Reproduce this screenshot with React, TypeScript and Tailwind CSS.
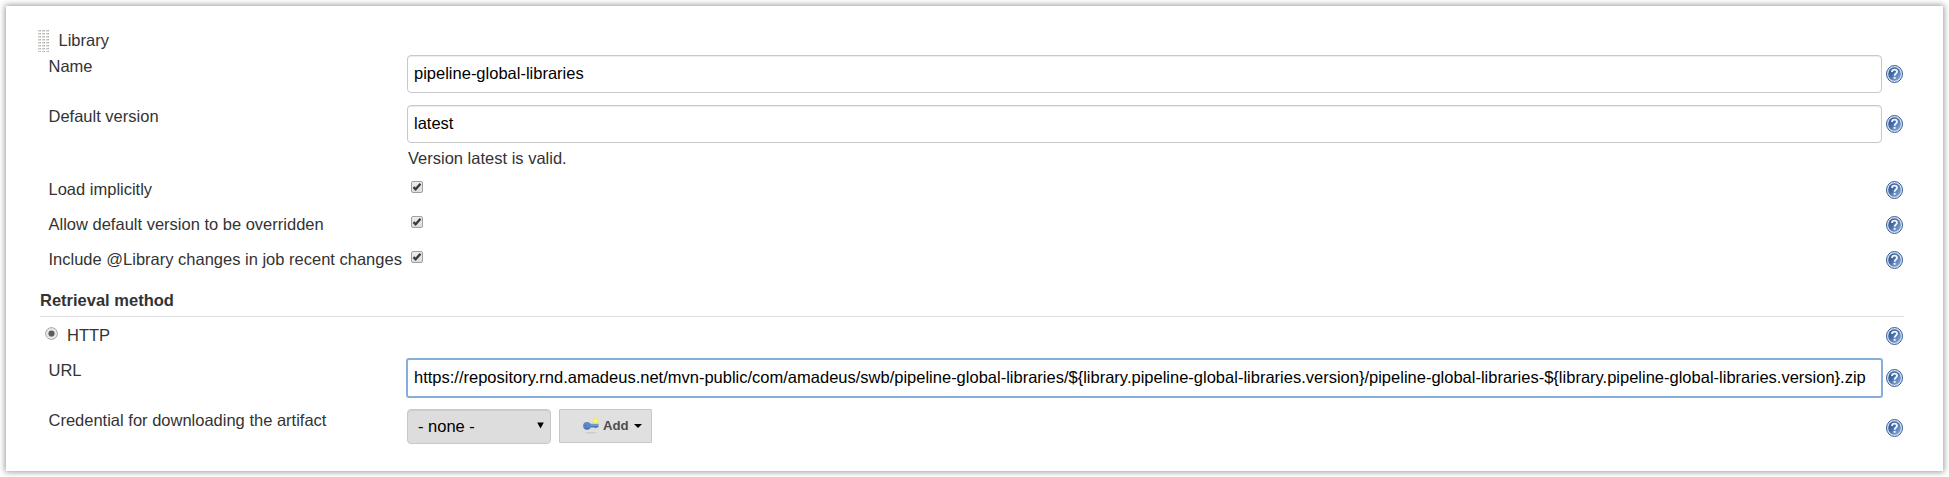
import React from "react";

function HelpIcon({ className }: { className: string }) {
  return (
    <svg viewBox="0 0 17 18" className={`h-[18px] w-[17px] shrink-0 ${className}`} aria-label="Help">
      <defs>
        <linearGradient id="help" x1="0" y1="0" x2="1" y2="1">
          <stop offset="0.1" stopColor="#2f5796" />
          <stop offset="0.45" stopColor="#4a70aa" />
          <stop offset="1" stopColor="#93b1da" />
        </linearGradient>
      </defs>
      <ellipse cx="8.5" cy="9" rx="8" ry="8.5" fill="#d5e0ef" stroke="#3a6096" strokeWidth="1" />
      <ellipse cx="8.5" cy="9" rx="6.3" ry="6.7" fill="url(#help)" />
      <path d="M6 7C6 5.3 7 4.7 8.5 4.7C10.1 4.7 11 5.5 11 6.7C11 8.5 8.6 8.5 8.6 10.8" fill="none" stroke="#f4f7fb" strokeWidth="1.8" />
      <rect x="7.6" y="11.9" width="2" height="1.9" fill="#f4f7fb" />
    </svg>
  );
}

function Check() {
  return (
    <svg viewBox="0 0 12 12" className="mt-px ml-1 block h-3 w-3" role="checkbox" aria-checked="true">
      <defs>
        <linearGradient id="box" x1="0" y1="0" x2="0" y2="1">
          <stop offset="0" stopColor="#eeeeee" />
          <stop offset="1" stopColor="#dcdcdc" />
        </linearGradient>
      </defs>
      <rect x="0.5" y="0.5" width="11" height="11" rx="1.5" fill="url(#box)" stroke="#a0a0a0" />
      <path d="M2.5 6.2L4.6 8.2L9.5 2.8" fill="none" stroke="#3c3c3c" strokeWidth="2.4" />
    </svg>
  );
}

function Row({
  label,
  className,
  labelClass = "",
  helpClass,
  children,
}: {
  label: string;
  className: string;
  labelClass?: string;
  helpClass: string;
  children?: React.ReactNode;
}) {
  return (
    <div className={`flex items-start ${className}`}>
      <div className={`w-[367px] shrink-0 whitespace-nowrap pl-[8.5px] ${labelClass}`}>{label}</div>
      <div className="w-[1475px] shrink-0">{children}</div>
      <HelpIcon className={`ml-1 ${helpClass}`} />
    </div>
  );
}

const inputClass =
  "block h-[38px] w-full rounded-[4px] border border-[#c8c8c8] bg-white px-[6px] pb-[2px] text-black shadow-[inset_0_1px_1px_rgba(0,0,0,0.075)] outline-none";

export default function App() {
  return (
    <div className="h-[477px] w-[1949px] overflow-hidden bg-white p-[6px] font-['Liberation_Sans',Arial,sans-serif] text-[16.5px] leading-[18px] text-[#333]">
      <div className="h-[465px] w-[1937px] bg-white pt-[24px] pl-[32px] shadow-[0_0_6px_1px_rgba(0,0,0,0.4)]">
        <div className="flex h-6 items-start">
          <svg viewBox="0 0 12 22" className="h-[22px] w-3" shapeRendering="crispEdges">
            <defs>
              <pattern id="grip" width="4" height="3" patternUnits="userSpaceOnUse">
                <rect width="3" height="1" fill="#c9c9c6" />
                <rect x="2" width="1" height="1" fill="#b0b0ac" />
                <rect y="1" width="3" height="1" fill="#e2e2df" />
              </pattern>
            </defs>
            <rect width="12" height="22" fill="url(#grip)" />
          </svg>
          <span className="mt-px ml-[8.5px]">Library</span>
        </div>
        <div className="pl-[2px]">
          <Row label="Name" className="h-[50px]" labelClass="pt-[3px]" helpClass="mt-[11px]">
            <input className={`mt-px ${inputClass}`} defaultValue="pipeline-global-libraries" />
          </Row>
          <Row label="Default version" className="h-[76px]" labelClass="pt-[3px]" helpClass="mt-[11px]">
            <input className={`mt-px ${inputClass}`} defaultValue="latest" />
            <div className="mt-[6px] ml-px">Version latest is valid.</div>
          </Row>
          <Row label="Load implicitly" className="h-[35px]" helpClass="mt-px">
            <Check />
          </Row>
          <Row label="Allow default version to be overridden" className="h-[35px]" helpClass="mt-px">
            <Check />
          </Row>
          <Row label="Include @Library changes in job recent changes" className="h-[35px]" helpClass="mt-px">
            <Check />
          </Row>
          <div className="mb-[9px] h-8 w-[1864px] border-b border-[#ddd] pt-[6px] font-bold">Retrieval method</div>
          <div className="flex h-8 items-start">
            <svg viewBox="0 0 13 13" className="mt-px ml-[5px] h-[13px] w-[13px]" role="radio" aria-checked="true">
              <circle cx="6.5" cy="6.5" r="5.9" fill="#e8e8e8" stroke="#a6a6a6" />
              <circle cx="6.5" cy="6.5" r="3.1" fill="#5c5c5c" />
            </svg>
            <span className="ml-[9px]">HTTP</span>
            <HelpIcon className="mt-px mr-10 ml-auto" />
          </div>
          <Row label="URL" className="h-[50px]" labelClass="pt-[3px]" helpClass="mt-[11px]">
            <input
              className="-mx-px block h-10 w-[1477px] rounded-[3px] border-2 border-[#86aedd] bg-white px-[6px] pb-[2px] text-black outline-none"
              defaultValue="https://repository.rnd.amadeus.net/mvn-public/com/amadeus/swb/pipeline-global-libraries/${library.pipeline-global-libraries.version}/pipeline-global-libraries-${library.pipeline-global-libraries.version}.zip"
            />
          </Row>
          <Row label="Credential for downloading the artifact" className="h-[50px]" labelClass="pt-[3px]" helpClass="mt-[11px]">
            <div className="mt-px flex items-start">
              <div className="flex h-[35px] w-[144px] items-center justify-between rounded-[4px] border border-[#c8c8c8] bg-[#ddd] pr-[6px] pl-[10px] text-black shadow-[inset_0_1px_1px_rgba(0,0,0,0.075)]">
                <span className="mb-[2px]">- none -</span>
                <svg viewBox="0 0 7 7" className="mb-[2px] h-[7px] w-[7px]">
                  <path d="M0.2 0.5H6.8L3.5 6.5Z" fill="#000" />
                </svg>
              </div>
              <button className="ml-2 flex h-[34px] w-[93px] items-center rounded-[1px] border border-[#c6c6c6] bg-[#e0e0e0] pl-[23px] text-[13.2px] font-bold text-[#4d4d4d]">
                <svg viewBox="0 0 16 16" className="h-4 w-4">
                  <ellipse cx="8" cy="14.8" rx="6" ry="0.7" fill="#c9c9c9" />
                  <rect x="5" y="5.8" width="10.6" height="3.2" rx="1" fill="#6e9ad0" />
                  <path d="M6 8h9.3v1.6h-1.6l-1 .8-1-.8H6z" fill="#4a78b5" />
                  <circle cx="4" cy="7.8" r="3.9" fill="#5b8ac6" />
                  <path d="M0.8 9.8A3.9 3.9 0 0 0 7.2 9.8Z" fill="#4271ae" />
                  <circle cx="2.4" cy="7.6" r="0.7" fill="#39618f" />
                  <circle cx="12.7" cy="2.8" r="2.9" fill="#f0ea6c" />
                  <circle cx="12.7" cy="2.8" r="1.5" fill="#fffb62" />
                </svg>
                <span className="ml-[4px]">Add</span>
                <svg viewBox="0 0 8 4" className="ml-[5px] h-1 w-2">
                  <path d="M0 0H8L4 4Z" fill="#000" />
                </svg>
              </button>
            </div>
          </Row>
        </div>
      </div>
    </div>
  );
}
